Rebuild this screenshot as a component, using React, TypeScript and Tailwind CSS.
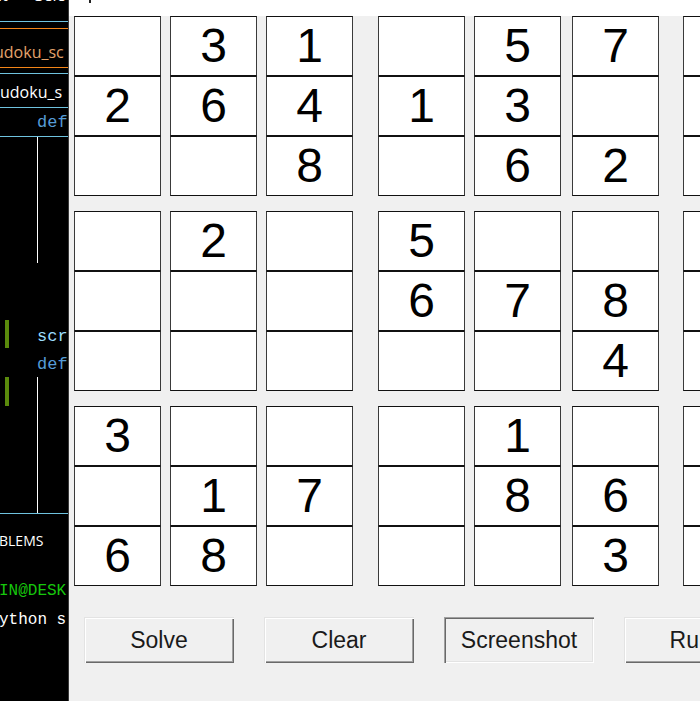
const GRID: number[][] = [
  [0, 3, 1, 0, 5, 7, 0, 0, 0],
  [2, 6, 4, 1, 3, 0, 0, 0, 0],
  [0, 0, 8, 0, 6, 2, 0, 0, 0],
  [0, 2, 0, 5, 0, 0, 0, 0, 0],
  [0, 0, 0, 6, 7, 8, 0, 0, 0],
  [0, 0, 0, 0, 0, 4, 0, 0, 0],
  [3, 0, 0, 0, 1, 0, 0, 0, 0],
  [0, 1, 7, 0, 8, 6, 0, 0, 0],
  [6, 8, 0, 0, 0, 3, 0, 0, 0],
];

// left offsets of each column (tk grid padding is a bit uneven)
const COL_GAP = ["ml-0", "ml-[9px]", "ml-[9px]", "ml-[25px]", "ml-[9px]", "ml-[11px]", "ml-[24px]", "ml-[9px]", "ml-[9px]"];

const BUTTONS = ["Solve", "Clear", "Screenshot", "Rules"];

const RAISED =
  "shadow-[inset_1px_1px_0_#e3e3e3,inset_2px_2px_0_#ffffff,inset_-1px_-1px_0_#696969,inset_-2px_-2px_0_#a0a0a0]";
const SUNKEN =
  "shadow-[inset_1px_1px_0_#a0a0a0,inset_2px_2px_0_#696969,inset_-1px_-1px_0_#ffffff,inset_-2px_-2px_0_#e3e3e3]";

function Editor() {
  return (
    <aside className="w-[68px] shrink-0 h-full bg-black overflow-hidden font-['Open_Sans','Noto_Sans',sans-serif] text-white">
      {/* menu bar, cut at the top */}
      <div className="h-[21px] overflow-hidden">
        <div className="-mt-[15px] flex text-[16px] leading-[20px] whitespace-nowrap">
          <span className="-ml-[2px]">it</span>
          <span className="ml-[27px]">Sele</span>
        </div>
      </div>
      <div className="h-px bg-[#6fc3df]" />
      <div className="h-[6px]" />
      <div className="h-px bg-[#f38518]" />
      {/* active tab */}
      <div className="h-[38px] pt-[15px] overflow-hidden">
        <div className="text-[16px] leading-[16px] text-[#e3a26b] whitespace-nowrap -ml-[6px]">udoku_sc</div>
      </div>
      <div className="h-px bg-[#f38518]" />
      <div className="h-[5px]" />
      <div className="h-px bg-[#6fc3df]" />
      {/* breadcrumb */}
      <div className="h-[33px] pt-[10px] overflow-hidden">
        <div className="text-[16px] leading-[16px] whitespace-nowrap">udoku_s</div>
      </div>
      <div className="h-px bg-[#6fc3df]" />
      {/* sticky scroll */}
      <div className="h-[28px] pt-[6px] pl-[37px] overflow-hidden">
        <div className="font-['Liberation_Mono',monospace] text-[17px] leading-[17px] text-[#569cd6] whitespace-nowrap">def</div>
      </div>
      <div className="h-px bg-[#6fc3df]" />

      {/* code area */}
      <div className="h-[126px] ml-[37px] w-px bg-white" />
      <div className="h-[57px]" />
      <div className="h-[28px] flex font-['Liberation_Mono',monospace] text-[17px] whitespace-nowrap">
        <div className="w-[37px] shrink-0 pl-[5px]">
          <div className="w-[4px] h-full bg-[#5a8a0c]" />
        </div>
        <span className="pt-[7px] leading-[20px] text-[#9cdcfe]">scr</span>
      </div>
      <div className="h-[29px] flex font-['Liberation_Mono',monospace] text-[17px] whitespace-nowrap">
        <div className="w-[37px] shrink-0" />
        <span className="pt-[7px] leading-[20px] text-[#569cd6]">def</span>
      </div>
      <div className="h-[136px] flex">
        <div className="w-[37px] shrink-0 pl-[5px]">
          <div className="w-[4px] h-[29px] bg-[#5a8a0c]" />
        </div>
        <div className="w-px bg-white" />
      </div>
      <div className="h-px bg-[#6fc3df]" />

      {/* panel */}
      <div className="mt-[19px] text-[14px] leading-[16px] whitespace-nowrap -ml-[1px]">BLEMS</div>
      <div className="mt-[32px] font-['Liberation_Mono',monospace] text-[16px] leading-[20px] text-[#16c60c] whitespace-nowrap -ml-[1px]">
        IN@DESK
      </div>
      <div className="mt-[9px] font-['Liberation_Mono',monospace] text-[16px] leading-[20px] whitespace-nowrap -ml-[1px]">
        ython s
      </div>
    </aside>
  );
}

function Cell({ value }: { value: number }) {
  return (
    <div className="h-[60px] bg-white border border-x-[#3a3a3a] border-y-[#111] flex items-center justify-center text-[48px] leading-none text-black">
      {value ? value : ""}
    </div>
  );
}

export default function App() {
  return (
    <div className="w-[700px] h-[701px] flex overflow-hidden bg-[#f0f0f0]">
      <Editor />
      <div className="w-px shrink-0 bg-[#3a3a3a]" />
      <main className="flex-1 min-w-0 flex flex-col overflow-hidden font-['Liberation_Sans',Arial,sans-serif]">
        <div className="h-[16px] shrink-0 bg-white pl-[20px] overflow-hidden">
          <div className="w-[2px] h-[3px] bg-[#222]" />
        </div>

        <div className="flex flex-col gap-[15px] pl-[5px]">
          {[0, 1, 2].map((block) => (
            <div key={block} className="flex">
              {Array.from({ length: 9 }).map((_, c) => (
                <div key={c} className={`w-[87px] shrink-0 flex flex-col ${COL_GAP[c]}`}>
                  {[0, 1, 2].map((r) => (
                    <Cell key={r} value={GRID[block * 3 + r][c]} />
                  ))}
                </div>
              ))}
            </div>
          ))}
        </div>

        <div className="flex gap-[30px] pl-[15px] mt-[31px]">
          {BUTTONS.map((label) => (
            <button
              key={label}
              className={`w-[150px] h-[46px] shrink-0 bg-[#f0f0f0] text-[23px] text-[#1a1a1a] flex items-center justify-center ${
                label === "Screenshot" ? SUNKEN : RAISED
              }`}
            >
              {label}
            </button>
          ))}
        </div>
      </main>
    </div>
  );
}
